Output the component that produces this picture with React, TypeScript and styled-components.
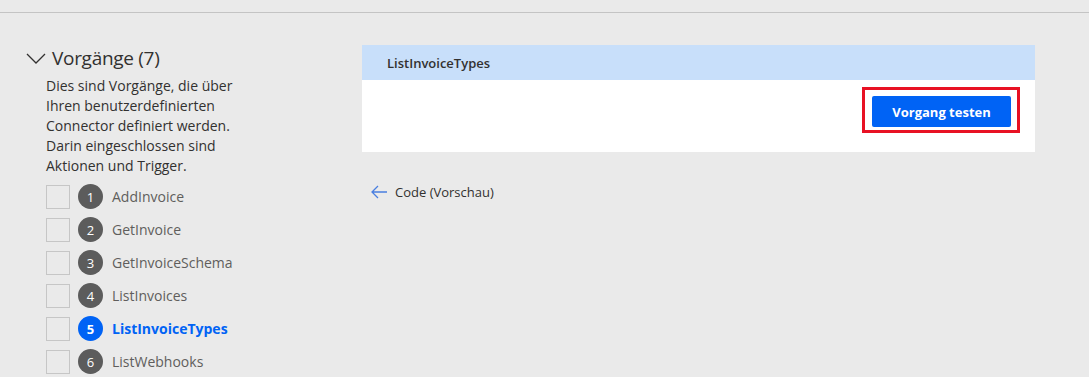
import React from 'react';
import styled, { createGlobalStyle } from 'styled-components';

const GlobalStyle = createGlobalStyle`
  html, body {
    margin: 0;
    padding: 0;
    background: #eaeaea;
    font-family: "Segoe UI", "Open Sans", "Noto Sans", sans-serif;
    color: #323130;
  }
`;

const TopBar = styled.div`
  height: 12px;
  border-bottom: 1px solid #c4c4c4;
`;

const Main = styled.div`
  display: flex;
  align-items: flex-start;
`;

const Sidebar = styled.div`
  width: 336px;
  padding: 31px 0 0 26px;
  box-sizing: border-box;
`;

const TitleRow = styled.div`
  display: flex;
  align-items: center;
  gap: 6px;
  height: 28px;
`;

const Title = styled.span`
  font-size: 19px;
  letter-spacing: -0.3px;
  color: #323130;
`;

const Description = styled.p`
  margin: 4px 0 0 20px;
  width: 220px;
  font-size: 14px;
  line-height: 20px;
  color: #323130;
`;

const OpList = styled.ul`
  list-style: none;
  margin: 4px 0 0 20px;
  padding: 0;
`;

const OpRow = styled.li`
  display: flex;
  align-items: center;
  height: 33px;
`;

const Check = styled.span`
  width: 22px;
  height: 22px;
  border: 1px solid #c6c6c6;
  margin-right: 8px;
`;

const Badge = styled.span<{ active: boolean }>`
  width: 25px;
  height: 25px;
  border-radius: 50%;
  background: ${(p) => (p.active ? '#0063f5' : '#5c5c5c')};
  color: #fff;
  font-size: 13px;
  font-weight: ${(p) => (p.active ? 700 : 400)};
  display: flex;
  align-items: center;
  justify-content: center;
  margin-right: 9px;
`;

const OpName = styled.span<{ active: boolean }>`
  font-size: 14px;
  color: ${(p) => (p.active ? '#0063f5' : '#605e5c')};
  font-weight: ${(p) => (p.active ? 700 : 400)};
`;

const Content = styled.div`
  padding-top: 32px;
  margin-left: 26px;
  width: 673px;
`;

const Card = styled.div`
  background: #fff;
`;

const CardHeader = styled.div`
  background: #c8dffa;
  height: 35px;
  display: flex;
  align-items: center;
  padding-left: 25px;
  font-size: 13px;
  font-weight: 600;
  color: #323130;
`;

const CardBody = styled.div`
  display: flex;
  justify-content: flex-end;
  padding: 7px 15px 19px;
`;

const Highlight = styled.div`
  border: 3px solid #e81123;
  padding: 6px 6px 3px 7px;
`;

const PrimaryButton = styled.button`
  width: 139px;
  height: 31px;
  border: none;
  border-radius: 2px;
  background: #0063f5;
  color: #fff;
  font-family: inherit;
  font-size: 13px;
  font-weight: 700;
  display: block;
`;

const BackLink = styled.div`
  display: flex;
  align-items: center;
  gap: 8px;
  margin: 31px 0 0 9px;
  font-size: 13px;
  color: #323130;
`;

const ops = [
  'AddInvoice',
  'GetInvoice',
  'GetInvoiceSchema',
  'ListInvoices',
  'ListInvoiceTypes',
  'ListWebhooks',
];

export default function App() {
  return (
    <>
      <GlobalStyle />
      <TopBar />
      <Main>
        <Sidebar>
          <TitleRow>
            <svg width="20" height="11" viewBox="0 0 20 11">
              <path d="M1 1 L10 10 L19 1" fill="none" stroke="#323130" strokeWidth="1.3" />
            </svg>
            <Title>Vorgänge (7)</Title>
          </TitleRow>
          <Description>
            Dies sind Vorgänge, die über Ihren benutzerdefinierten Connector definiert werden.
            Darin eingeschlossen sind Aktionen und Trigger.
          </Description>
          <OpList>
            {ops.map((name, i) => {
              const active = i === 4;
              return (
                <OpRow key={name}>
                  <Check />
                  <Badge active={active}>{i + 1}</Badge>
                  <OpName active={active}>{name}</OpName>
                </OpRow>
              );
            })}
          </OpList>
        </Sidebar>
        <Content>
          <Card>
            <CardHeader>ListInvoiceTypes</CardHeader>
            <CardBody>
              <Highlight>
                <PrimaryButton>Vorgang testen</PrimaryButton>
              </Highlight>
            </CardBody>
          </Card>
          <BackLink>
            <svg width="16" height="14" viewBox="0 0 16 14">
              <path d="M7 1 L1 7 L7 13 M1 7 H16" fill="none" stroke="#4a7fe0" strokeWidth="1.3" />
            </svg>
            Code (Vorschau)
          </BackLink>
        </Content>
      </Main>
    </>
  );
}
